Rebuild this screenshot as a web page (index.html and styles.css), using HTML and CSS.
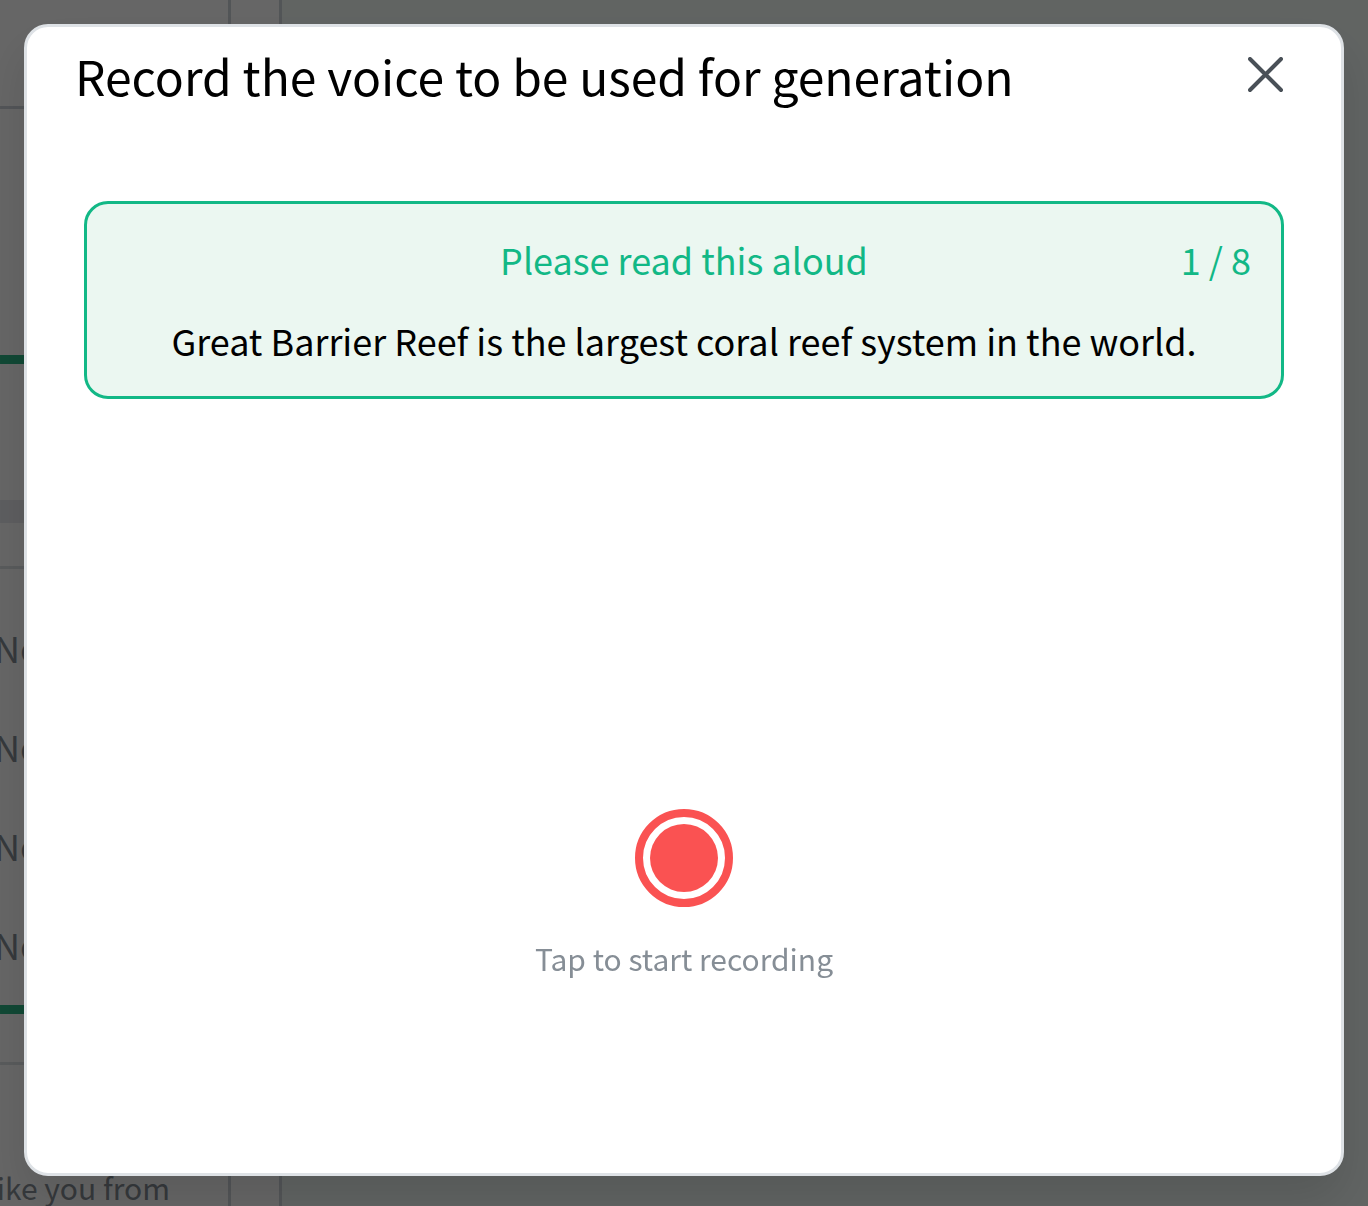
FILE: index.html
```html
<!DOCTYPE html>
<html lang="en">
<head>
    <meta charset="UTF-8">
    <meta name="viewport" content="width=device-width, initial-scale=1">
    <title>Record voice</title>
    <link rel="stylesheet" href="styles.css">
</head>
<body>

<div class="page" aria-hidden="true">
    <div class="column">
        <div class="block top"></div>
        <div class="block intro"></div>
        <div class="bar"></div>
        <div class="block player"></div>
        <div class="track"></div>
        <div class="block spacer"></div>
        <ul class="list">
            <li>No</li>
            <li>No</li>
            <li>No</li>
            <li>No</li>
        </ul>
        <div class="bar"></div>
        <div class="block after"></div>
        <p class="note">like you from</p>
    </div>
    <div class="gutter"></div>
    <div class="main"></div>
</div>

<div class="overlay">
    <div class="modal" role="dialog" aria-modal="true" aria-labelledby="modal-title">
        <header class="modal-header">
            <h1 id="modal-title">Record the voice to be used for generation</h1>
            <button class="close" type="button" aria-label="Close">
                <svg viewBox="0 0 36 36" width="36" height="36">
                    <path d="M2 2 L33 33 M33 2 L2 33"/>
                </svg>
            </button>
        </header>

        <section class="prompt">
            <div class="prompt-top">
                <span class="prompt-label">Please read this aloud</span>
                <span class="prompt-count">1 / 8</span>
            </div>
            <p class="prompt-text">Great Barrier Reef is the largest coral reef system in the world.</p>
        </section>

        <div class="recorder">
            <button class="record" type="button" id="record" aria-label="Record">
                <svg viewBox="0 0 98 98" width="98" height="98">
                    <circle class="ring" cx="49" cy="49" r="45"/>
                    <circle class="dot" cx="49" cy="49" r="34"/>
                </svg>
            </button>
            <label for="record">Tap to start recording</label>
        </div>
    </div>
</div>

</body>
</html>
```

FILE: styles.css
```css
* {
    box-sizing: border-box;
}
body {
    margin: 0;
    height: 100vh;
    overflow: hidden;
    font-family: "Noto Sans CJK JP", "Noto Sans", sans-serif;
    color: #000;
}
h1, p, ul {
    margin: 0;
    padding: 0;
    font-weight: 400;
}
button {
    padding: 0;
    border: none;
    background: none;
    cursor: pointer;
}
svg {
    display: block;
}

/* page behind the dialog */
.page {
    display: flex;
    height: 100%;
    margin-left: -24px;
    color: #868e96;
}
.column {
    width: 255px;
    flex: none;
    border-right: 3px solid #ced4da;
}
.gutter {
    width: 51px;
    flex: none;
    border-right: 3px solid #ced4da;
}
.main {
    flex: 1;
    background: #f2faf6;
}
.block {
    border-bottom: 3px solid #dee2e6;
}
.top {
    height: 109px;
    border-color: #ced4da;
}
.intro {
    height: 246px;
    border: none;
}
.bar {
    height: 9px;
    background: #2bb585;
}
.player {
    height: 136px;
    border: none;
}
.track {
    height: 23px;
    background: #e9ebef;
}
.spacer {
    height: 46px;
}
.list {
    height: 436px;
    padding: 29px 0 0 18px;
    list-style: none;
    font-size: 36px;
    line-height: 99px;
}
.after {
    height: 51px;
}
.note {
    padding: 98px 58px 0 0;
    font-size: 30px;
    line-height: 48px;
    text-align: right;
    white-space: nowrap;
}

.overlay {
    position: fixed;
    inset: 0;
    display: flex;
    padding: 24px 24px 30px;
    background: rgba(0, 0, 0, 0.6);
}
.modal {
    flex: 1;
    display: flex;
    flex-direction: column;
    border: 3px solid #dee2e6;
    border-radius: 24px;
    background: #fff;
    box-shadow: 0 24px 48px rgba(0, 0, 0, 0.12);
}
.modal-header {
    display: flex;
    justify-content: space-between;
    align-items: flex-start;
    padding: 12px 57px 0 48px;
}
.modal-header h1 {
    font-size: 48px;
    line-height: 72px;
}
.close {
    margin-top: 18px;
}
.close path {
    fill: none;
    stroke: #495057;
    stroke-width: 4;
    stroke-linecap: round;
}

.prompt {
    margin: 90px 57px 0;
    padding: 28px 30px 29px;
    border: 3px solid #12b886;
    border-radius: 24px;
    background: #ebf7f1;
    font-size: 36px;
    line-height: 54px;
    text-align: center;
}
.prompt-top {
    display: grid;
    grid-template-columns: 1fr auto 1fr;
    color: #12b886;
}
.prompt-label {
    grid-column: 2;
}
.prompt-count {
    text-align: right;
}
.prompt-text {
    margin-top: 27px;
}

.recorder {
    flex: 1;
    display: flex;
    flex-direction: column;
    align-items: center;
    justify-content: flex-end;
    gap: 27px;
    padding-bottom: 191px;
    font-size: 30px;
    line-height: 48px;
    color: #868e96;
}
.record .ring {
    fill: none;
    stroke: #fa5252;
    stroke-width: 8;
}
.record .dot {
    fill: #fa5252;
}
```
